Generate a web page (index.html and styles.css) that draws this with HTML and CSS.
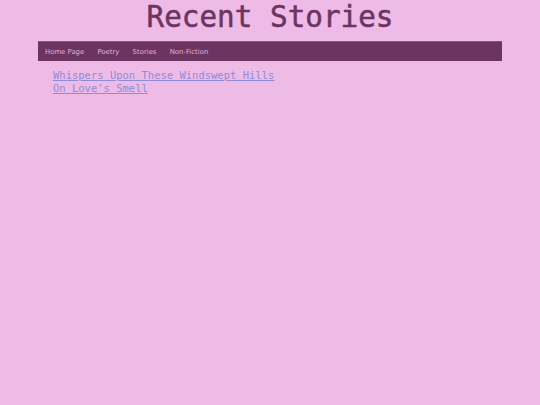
FILE: index.html
```html
<!DOCTYPE html>
<html>
<head>
<meta charset="utf-8">
<link rel="stylesheet" href="styles.css">
</head>
<body>
<div class="page">
  <h1 class="title">Recent Stories</h1>
  <nav class="nav">
    <a href="#">Home Page</a>
    <a href="#">Poetry</a>
    <a href="#">Stories</a>
    <a href="#">Non-Fiction</a>
  </nav>
  <ul class="stories">
    <li><a href="#">Whispers Upon These Windswept Hills</a></li>
    <li><a href="#">On Love's Smell</a></li>
  </ul>
</div>
</body>
</html>
```
FILE: styles.css
```css
html, body {
  margin: 0;
  padding: 0;
  background: #eebbe6;
}
.page {
  width: 464px;
  margin: 0 auto;
}
.title {
  margin: 0;
  height: 41px;
  line-height: 34px;
  text-align: center;
  font-family: "DejaVu Sans Mono", monospace;
  font-size: 29.3px;
  font-weight: normal;
  color: #6c3461;
  -webkit-text-stroke: 0.5px #6c3461;
}
.nav {
  display: flex;
  height: 20px;
  align-items: center;
  background: #6c3461;
  border-top: 1px solid #8a5480;
  box-sizing: border-box;
}
.nav a {
  font-family: "DejaVu Sans", sans-serif;
  font-size: 6.9px;
  color: #e3b0da;
  text-decoration: none;
  padding: 0 6.6px;
}
.nav a:first-child {
  padding-left: 7px;
}
.stories {
  list-style: none;
  margin: 7px 0 0 0;
  padding: 0 0 0 15px;
}
.stories li {
  line-height: 12px;
}
.stories a {
  font-family: "DejaVu Sans Mono", monospace;
  font-size: 10.5px;
  color: #8e8bd8;
}
```
